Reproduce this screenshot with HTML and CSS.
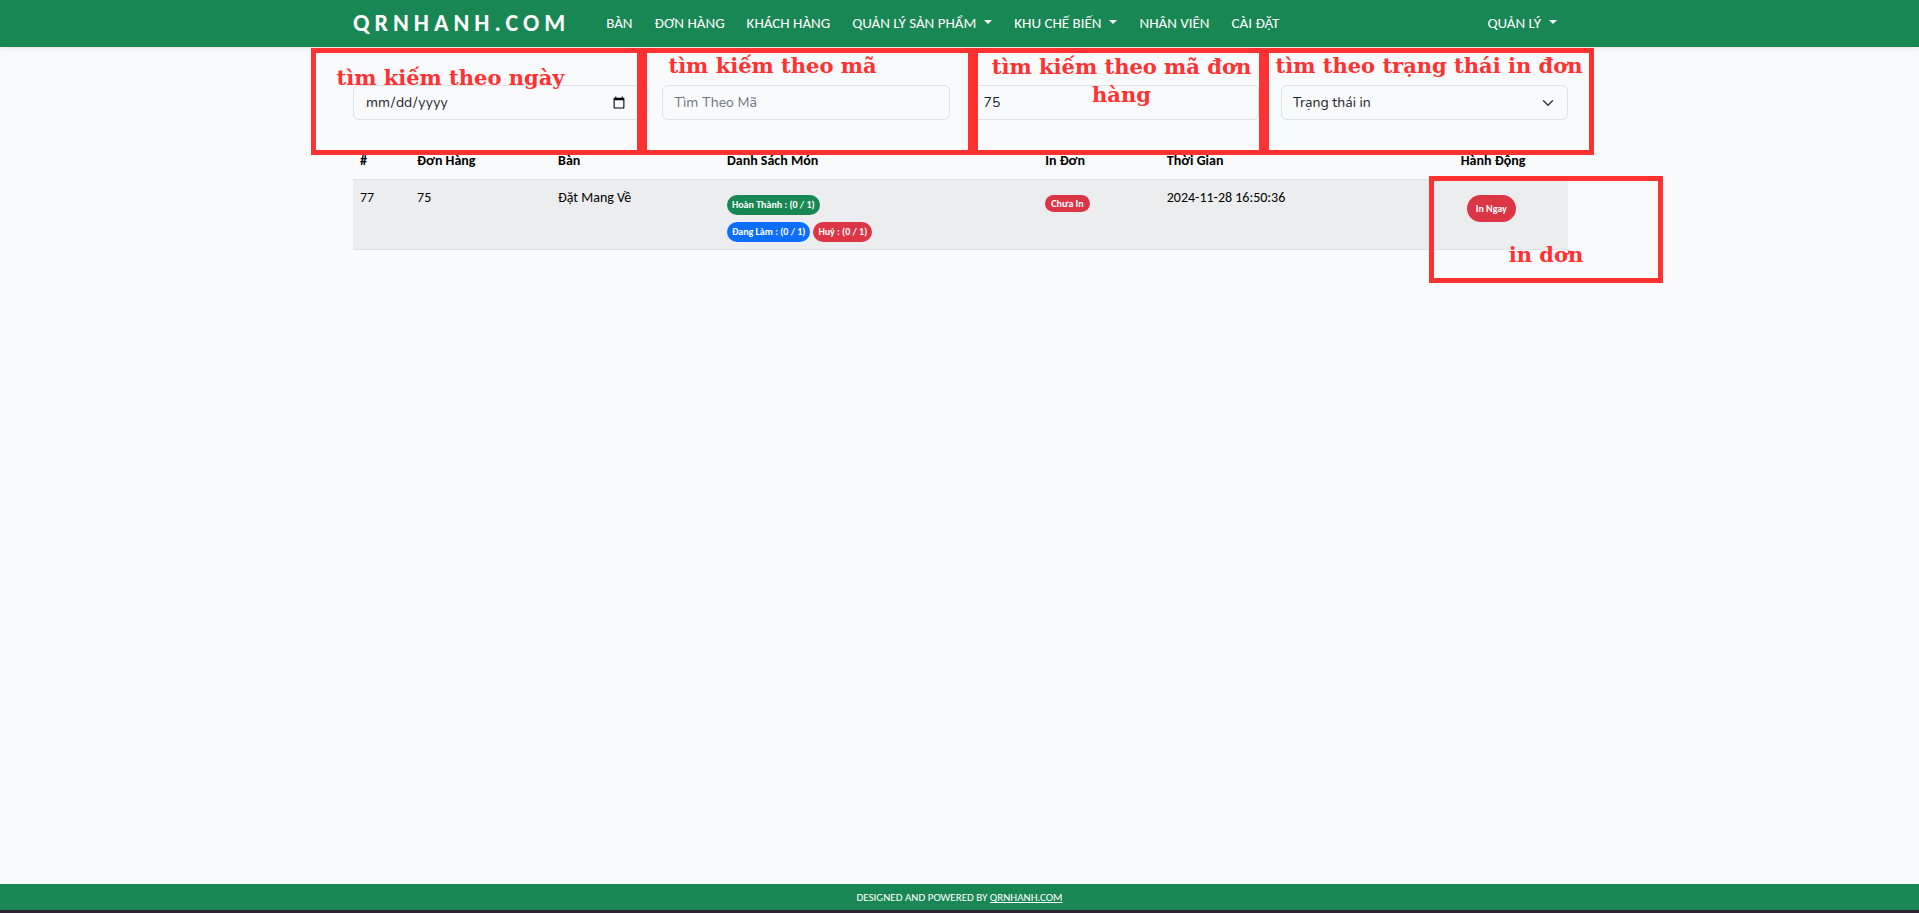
FILE: index.html
```html
<!DOCTYPE html>
<html lang="vi">
<head>
<meta charset="utf-8">
<title>QRNHANH.COM</title>
<link rel="stylesheet" href="styles.css">
</head>
<body>
<header class="topbar">
  <nav class="container nav">
    <a class="brand" href="#">QRNHANH.COM</a>
    <a class="nav-link" href="#">BÀN</a>
    <a class="nav-link" href="#">ĐƠN HÀNG</a>
    <a class="nav-link" href="#">KHÁCH HÀNG</a>
    <button class="nav-link caret" type="button">QUẢN LÝ SẢN PHẨM</button>
    <button class="nav-link caret" type="button">KHU CHẾ BIẾN</button>
    <a class="nav-link" href="#">NHÂN VIÊN</a>
    <a class="nav-link" href="#">CÀI ĐẶT</a>
    <button class="nav-link caret nav-end" type="button">QUẢN LÝ</button>
  </nav>
</header>
<main class="container content">
  <form class="filters">
    <input class="field" type="date" aria-label="Ngày">
    <input class="field" type="text" placeholder="Tìm Theo Mã" aria-label="Tìm theo mã">
    <input class="field" type="text" value="75" aria-label="Mã đơn hàng">
    <div class="select-wrap">
      <select class="field select" aria-label="Trạng thái in"><option>Trạng thái in</option></select>
      <svg class="chevron" viewBox="0 0 16 16" aria-hidden="true"><path d="m2 5 6 6 6-6"/></svg>
    </div>
  </form>
  <table class="orders">
    <colgroup><col class="c-id"><col class="c-order"><col class="c-table"><col class="c-items"><col class="c-print"><col class="c-time"><col class="c-action"></colgroup>
    <thead>
      <tr><th>#</th><th>Đơn Hàng</th><th>Bàn</th><th>Danh Sách Món</th><th>In Đơn</th><th>Thời Gian</th><th>Hành Động</th></tr>
    </thead>
    <tbody>
      <tr>
        <td>77</td><td>75</td><td>Đặt Mang Về</td>
        <td>
          <div class="badges">
            <div class="badge-row"><span class="badge green">Hoàn Thành : (0 / 1)</span></div>
            <div class="badge-row"><span class="badge blue">Đang Làm : (0 / 1)</span><span class="badge red">Huỷ : (0 / 1)</span></div>
          </div>
        </td>
        <td><div class="badges"><div class="badge-row"><span class="badge red status">Chưa In</span></div></div></td>
        <td>2024-11-28 16:50:36</td>
        <td><button class="print" type="button">In Ngay</button></td>
      </tr>
    </tbody>
  </table>
  <div class="note note-date">tìm kiếm theo ngày</div>
  <div class="note note-code">tìm kiếm theo mã</div>
  <div class="note note-order">tìm kiếm theo mã đơn hàng</div>
  <div class="note note-status">tìm theo trạng thái in đơn</div>
  <div class="note note-print">in dơn</div>
</main>
<footer class="footer">DESIGNED AND POWERED BY&nbsp;<a href="#">QRNHANH.COM</a></footer>
</body>
</html>
```
FILE: styles.css
```css
* { box-sizing: border-box; }
body {
  margin: 0;
  min-height: 100vh;
  display: flex;
  flex-direction: column;
  background: #f8fafc;
  color: #000;
  font: 14px/22px Calibri, Carlito, Lato, sans-serif;
}
button, input, select { font: inherit; }
.container { width: 100%; max-width: 1217px; margin: 0 auto; padding-left: 2px; }
.topbar { background: #198754; box-shadow: 0 2px 4px rgba(0, 0, 0, .08); }
.nav { display: flex; align-items: center; height: 47px; }
.brand {
  margin-right: 25px;
  color: #fff;
  font-size: 24px;
  line-height: 28px;
  padding-bottom: 1px;
  font-weight: 700;
  letter-spacing: 5px;
  text-decoration: none;
}
.nav-link {
  padding: 0 11px 2px;
  border: 0;
  background: none;
  color: #fff;
  font-size: 15px;
  line-height: 20px;
  text-decoration: none;
  white-space: nowrap;
}
.caret::after {
  content: "";
  display: inline-block;
  margin-left: 8px;
  vertical-align: 4px;
  border: 4px solid transparent;
  border-top-color: #fff;
  border-bottom: 0;
}
.nav-end { margin-left: auto; }
.content { position: relative; flex: 1; padding-top: 38px; }
.filters { display: grid; grid-template-columns: repeat(4, 1fr); gap: 22px; }
.field {
  width: 100%;
  height: 35px;
  padding: 5px 11px;
  border: 1px solid #dee2e6;
  border-radius: 6px;
  background: #f8fafc;
  color: #212529;
  font-family: Nunito, Lato, sans-serif;
  font-size: 14px;
}
.field::placeholder { color: #6c757d; }
.select-wrap { position: relative; }
.select { appearance: none; }
.chevron {
  position: absolute;
  top: 12px;
  right: 14px;
  width: 12px;
  height: 12px;
  fill: none;
  stroke: #343a40;
  stroke-width: 2;
  stroke-linecap: round;
  stroke-linejoin: round;
  pointer-events: none;
}
.orders { width: 100%; margin-top: 24px; border-collapse: collapse; table-layout: fixed; }
.orders th, .orders td {
  padding: 7px;
  border-bottom: 1px solid #dee2e6;
  text-align: left;
  vertical-align: top;
}
.orders th { padding: 6px 7px 8px; font-weight: 700; line-height: 21px; }
.orders td { background: #ebedef; }
.c-id { width: 4.7%; }
.c-order { width: 11.6%; }
.c-table { width: 13.9%; }
.c-items { width: 26.2%; }
.c-print { width: 10%; }
.c-time { width: 24.2%; }
.c-action { width: 9.4%; }
.badges { display: flex; flex-direction: column; gap: 7px; padding-top: 8px; }
.badge-row { display: flex; gap: 3px; }
.badge {
  padding: 4px 5px;
  border-radius: 10px;
  color: #fff;
  font-size: 10px;
  line-height: 12px;
  font-weight: 700;
  white-space: nowrap;
}
.status { padding: 3px 6px; line-height: 11px; }
.green { background: #198754; }
.blue { background: #0d6efd; }
.red { background: #dc3545; }
.print {
  display: block;
  margin: 8px 6px 0;
  padding: 8px 9px;
  border: 0;
  border-radius: 14px;
  background: #dc3545;
  color: #fff;
  font-size: 10px;
  line-height: 11px;
  font-weight: 700;
}
.note {
  position: absolute;
  height: 107px;
  border: 5px solid #ff3131;
  color: #ff3131;
  font: 700 21px/29px "DejaVu Serif", serif;
  text-align: center;
}
.note-date { left: -40px; top: 1px; width: 331px; padding: 10px 52px 0 0; }
.note-code { left: 291px; top: 1px; width: 331px; padding-right: 70px; line-height: 26px; }
.note-order { left: 622px; top: 1px; width: 291px; padding-left: 6px; line-height: 28px; }
.note-status { left: 913px; top: 1px; width: 330px; line-height: 26px; }
.note-print { left: 1078px; top: 129px; width: 234px; padding-top: 59px; }
.footer {
  display: flex;
  justify-content: center;
  align-items: center;
  height: 29px;
  padding-top: 2px;
  border-bottom: 3px solid #2b2233;
  background: #198754;
  color: #fff;
  font-size: 11px;
}
.footer a { color: #fff; }
```
